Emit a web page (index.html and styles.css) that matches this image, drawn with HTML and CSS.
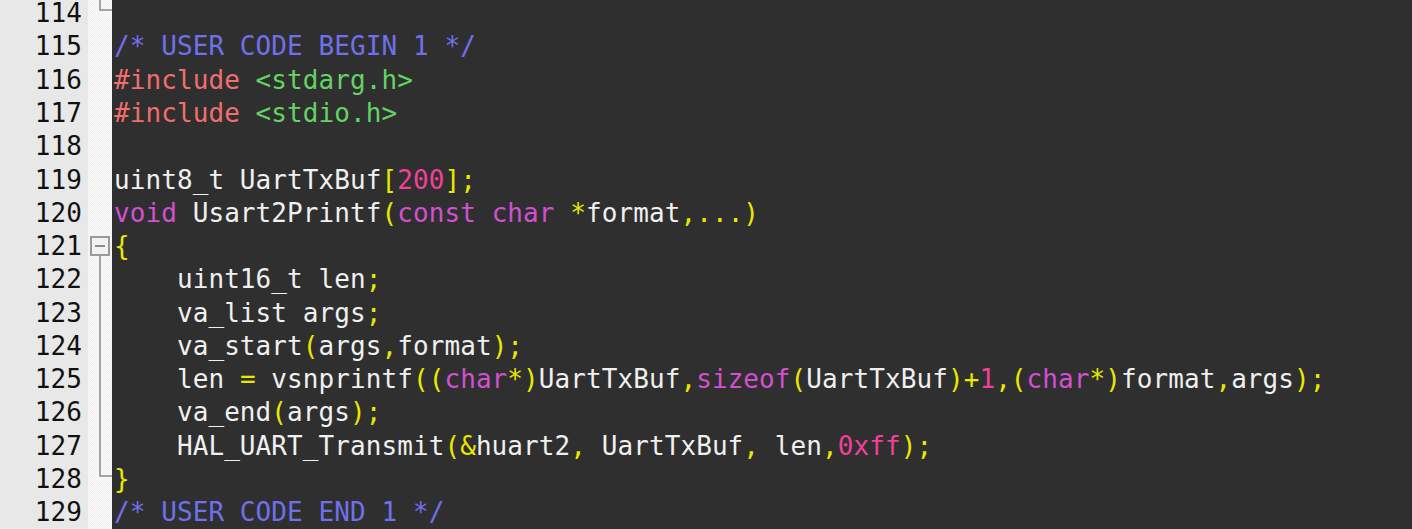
FILE: index.html
```html
<!DOCTYPE html>
<html>
<head>
<meta charset="utf-8">
<link rel="stylesheet" href="styles.css">
</head>
<body>
<div class="editor">
  <div class="gutter">
    <div class="ln">114</div><div class="ln">115</div><div class="ln">116</div><div class="ln">117</div>
    <div class="ln">118</div><div class="ln">119</div><div class="ln">120</div><div class="ln">121</div>
    <div class="ln">122</div><div class="ln">123</div><div class="ln">124</div><div class="ln">125</div>
    <div class="ln">126</div><div class="ln">127</div><div class="ln">128</div><div class="ln">129</div>
  </div>
  <div class="fold">
    <div class="fl end"></div>
    <div class="fl"></div><div class="fl"></div><div class="fl"></div><div class="fl"></div>
    <div class="fl"></div><div class="fl"></div>
    <div class="fl start"><span class="box"></span></div>
    <div class="fl mid"></div><div class="fl mid"></div><div class="fl mid"></div>
    <div class="fl mid"></div><div class="fl mid"></div><div class="fl mid"></div>
    <div class="fl end"></div>
    <div class="fl"></div>
  </div>
  <div class="code">
    <div class="line"> </div>
    <div class="line"><span class="c">/* USER CODE BEGIN 1 */</span></div>
    <div class="line"><span class="pp">#include</span> <span class="s">&lt;stdarg.h&gt;</span></div>
    <div class="line"><span class="pp">#include</span> <span class="s">&lt;stdio.h&gt;</span></div>
    <div class="line"> </div>
    <div class="line">uint8_t UartTxBuf<span class="o">[</span><span class="n">200</span><span class="o">];</span></div>
    <div class="line"><span class="k">void</span> Usart2Printf<span class="o">(</span><span class="k">const</span> <span class="k">char</span> <span class="o">*</span>format<span class="o">,...)</span></div>
    <div class="line"><span class="o">{</span></div>
    <div class="line">    uint16_t len<span class="o">;</span></div>
    <div class="line">    va_list args<span class="o">;</span></div>
    <div class="line">    va_start<span class="o">(</span>args<span class="o">,</span>format<span class="o">);</span></div>
    <div class="line">    len <span class="o">=</span> vsnprintf<span class="o">((</span><span class="k">char</span><span class="o">*)</span>UartTxBuf<span class="o">,</span><span class="k">sizeof</span><span class="o">(</span>UartTxBuf<span class="o">)+</span><span class="n">1</span><span class="o">,(</span><span class="k">char</span><span class="o">*)</span>format<span class="o">,</span>args<span class="o">);</span></div>
    <div class="line">    va_end<span class="o">(</span>args<span class="o">);</span></div>
    <div class="line">    HAL_UART_Transmit<span class="o">(&amp;</span>huart2<span class="o">,</span> UartTxBuf<span class="o">,</span> len<span class="o">,</span><span class="n">0xff</span><span class="o">);</span></div>
    <div class="line"><span class="o">}</span></div>
    <div class="line"><span class="c">/* USER CODE END 1 */</span></div>
  </div>
</div>
</body>
</html>
```
FILE: styles.css
```css
html, body {
  margin: 0;
  padding: 0;
  height: 100%;
  background: #2f2f2f;
  overflow: hidden;
}

.editor {
  display: flex;
  height: 540px;
  margin-top: -2.8px;
  font-family: "DejaVu Sans Mono", "Liberation Mono", monospace;
  font-size: 26px;
  letter-spacing: 0.08px;
}

.gutter {
  width: 82px;
  padding-right: 6px;
  background: #e8e8e8;
  color: #111111;
  text-align: right;
}

.ln {
  height: 33.27px;
  line-height: 33.27px;
}

.fold {
  width: 24px;
  background-color: #f6f6f6;
  background-image: repeating-conic-gradient(#fbfbfb 0 25%, #f0f0f0 0 50%);
  background-size: 2px 2px;
}

.fl {
  height: 33.27px;
  position: relative;
}

.fl.mid::before {
  content: "";
  position: absolute;
  left: 11px;
  top: 0;
  bottom: 0;
  width: 2px;
  background: #a4a4a4;
}

.fl.end::before {
  content: "";
  position: absolute;
  left: 11px;
  top: 0;
  height: 14px;
  width: 2px;
  background: #a4a4a4;
}

.fl.end::after {
  content: "";
  position: absolute;
  left: 11px;
  top: 12px;
  width: 13px;
  height: 2px;
  background: #a4a4a4;
}

.fl.start::after {
  content: "";
  position: absolute;
  left: 11px;
  top: 26px;
  bottom: 0;
  width: 2px;
  background: #a4a4a4;
}

.box {
  position: absolute;
  left: 2px;
  top: 6px;
  width: 16px;
  height: 16px;
  border: 2px solid #9a9a9a;
  background: #f2f2f2;
}

.box::after {
  content: "";
  position: absolute;
  left: 3px;
  right: 3px;
  top: 7px;
  height: 2px;
  background: #8c8c8c;
}

.code {
  flex: 1;
  padding-left: 2px;
  color: #f0f0f0;
}

.line {
  height: 33.27px;
  line-height: 33.27px;
  white-space: pre;
}

.c { color: #7070ec; }
.pp { color: #f06e6e; }
.s { color: #62d462; }
.k { color: #d24fd2; }
.n { color: #f2409a; }
.o { color: #e8e800; }
```
